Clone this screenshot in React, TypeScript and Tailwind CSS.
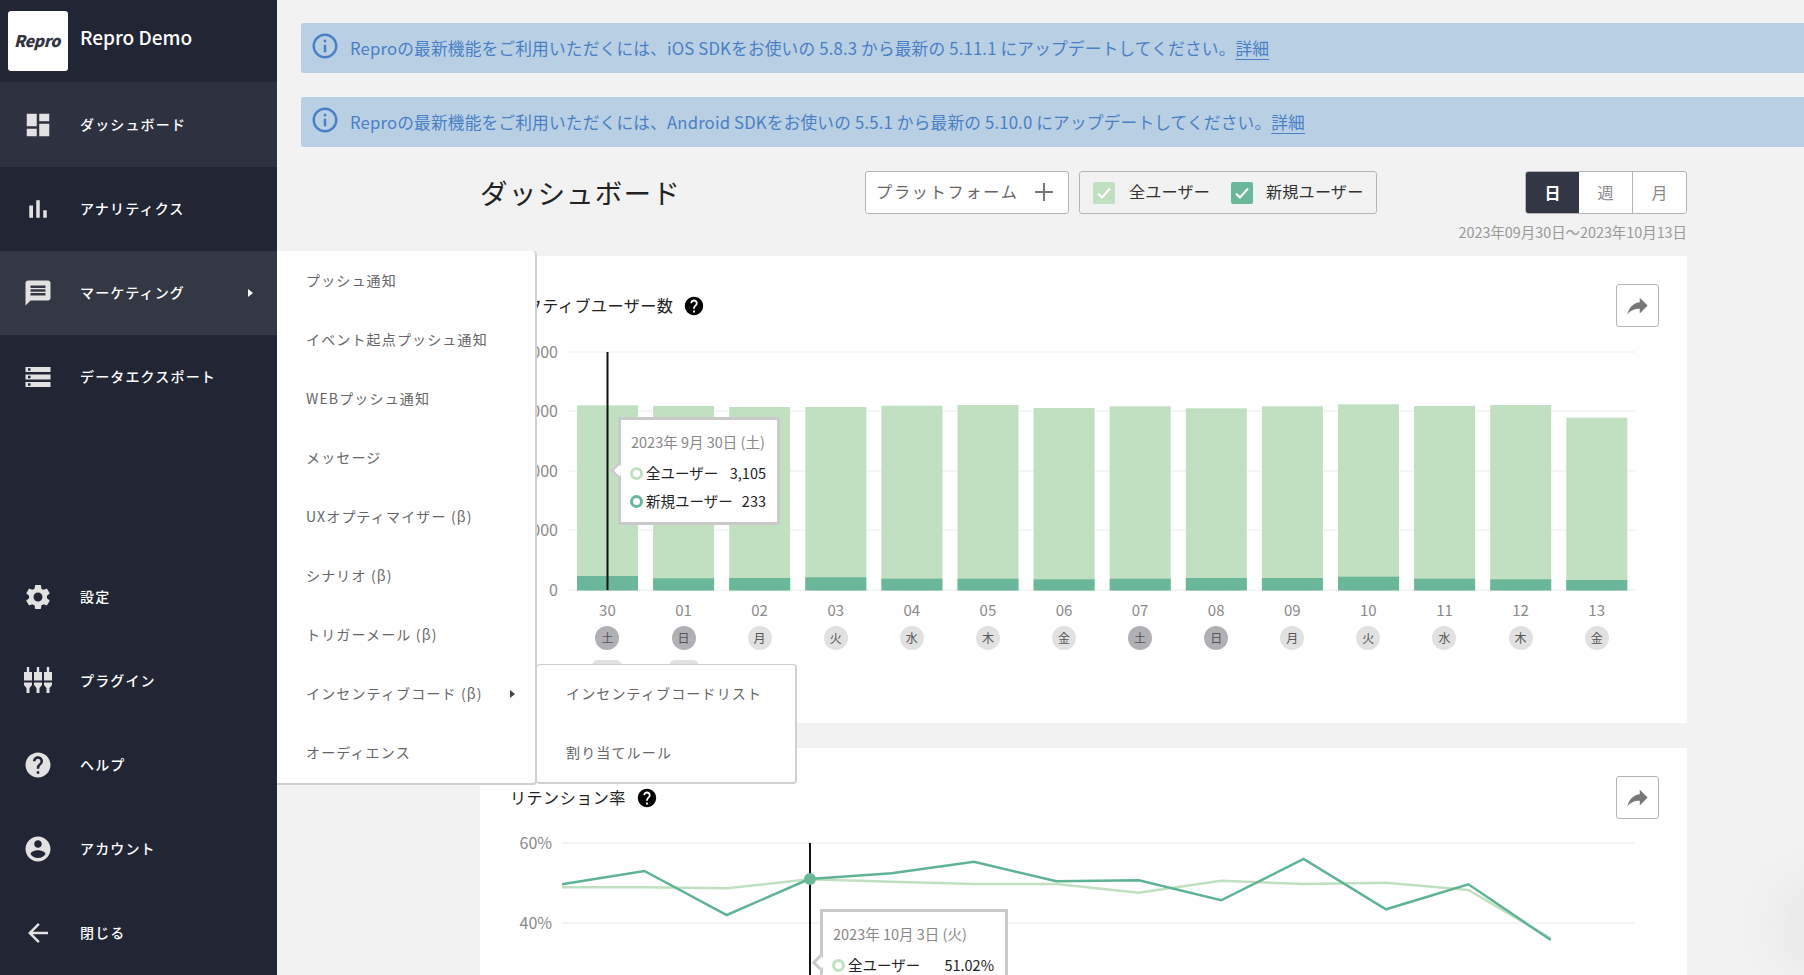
import * as React from 'react';

const FONT = '"Noto Sans CJK JP", "Noto Sans", sans-serif';

const ICONS = {
  dashboard: 'M3 13h8V3H3v10zm0 8h8v-6H3v6zm10 0h8V11h-8v10zm0-18v6h8V3h-8z',
  analytics: 'M5 9.2h3V19H5zM10.6 5h2.8v14h-2.8zm5.6 8H19v6h-2.8z',
  message: 'M20 2H4c-1.1 0-1.99.9-1.99 2L2 22l4-4h14c1.1 0 2-.9 2-2V4c0-1.1-.9-2-2-2zm-2 12H6v-2h12v2zm0-3H6V9h12v2zm0-3H6V6h12v2z',
  storage: 'M2 20h20v-4H2v4zm2-3h2v2H4v-2zM2 4v4h20V4H2zm4 3H4V5h2v2zm-4 7h20v-4H2v4zm2-3h2v2H4v-2z',
  settings: 'M19.14,12.94c0.04-0.3,0.06-0.61,0.06-0.94c0-0.32-0.02-0.64-0.07-0.94l2.03-1.58c0.18-0.14,0.23-0.41,0.12-0.61 l-1.92-3.32c-0.12-0.22-0.37-0.29-0.59-0.22l-2.39,0.96c-0.5-0.38-1.03-0.7-1.62-0.94L14.4,2.81c-0.04-0.24-0.24-0.41-0.48-0.41 h-3.84c-0.24,0-0.43,0.17-0.47,0.41L9.25,5.35C8.66,5.59,8.12,5.92,7.63,6.29L5.24,5.33c-0.22-0.08-0.47,0-0.59,0.22L2.74,8.87 C2.62,9.08,2.66,9.34,2.86,9.48l2.03,1.58C4.84,11.36,4.8,11.69,4.8,12s0.02,0.64,0.07,0.94l-2.03,1.58 c-0.18,0.14-0.23,0.41-0.12,0.61l1.92,3.32c0.12,0.22,0.37,0.29,0.59,0.22l2.39-0.96c0.5,0.38,1.03,0.7,1.62,0.94l0.36,2.54 c0.05,0.24,0.24,0.41,0.48,0.41h3.84c0.24,0,0.44-0.17,0.47-0.41l0.36-2.54c0.59-0.24,1.13-0.56,1.62-0.94l2.39,0.96 c0.22,0.08,0.47,0,0.59-0.22l1.92-3.32c0.12-0.22,0.07-0.47-0.12-0.61L19.14,12.94z M12,15.6c-1.98,0-3.6-1.62-3.6-3.6 s1.62-3.6,3.6-3.6s3.6,1.62,3.6,3.6S13.98,15.6,12,15.6z',
  help: 'M12 2C6.48 2 2 6.48 2 12s4.48 10 10 10 10-4.48 10-10S17.52 2 12 2zm1 17h-2v-2h2v2zm2.07-7.75l-.9.92C13.45 12.9 13 13.5 13 15h-2v-.5c0-1.1.45-2.1 1.17-2.83l1.24-1.26c.37-.36.59-.86.59-1.41 0-1.1-.9-2-2-2s-2 .9-2 2H8c0-2.21 1.79-4 4-4s4 1.79 4 4c0 .88-.36 1.68-.93 2.25z',
  account: 'M12 2C6.48 2 2 6.48 2 12s4.48 10 10 10 10-4.48 10-10S17.52 2 12 2zm0 3c1.66 0 3 1.34 3 3s-1.34 3-3 3-3-1.34-3-3 1.34-3 3-3zm0 14.2c-2.5 0-4.71-1.28-6-3.22.03-1.99 4-3.08 6-3.08 1.99 0 5.97 1.09 6 3.08-1.29 1.94-3.5 3.22-6 3.22z',
  back: 'M20 11H7.83l5.59-5.59L12 4l-8 8 8 8 1.41-1.41L7.83 13H20v-2z',
  info: 'M11 7h2v2h-2zm0 4h2v6h-2zm1-9C6.48 2 2 6.48 2 12s4.48 10 10 10 10-4.48 10-10S17.52 2 12 2zm0 18c-4.41 0-8-3.59-8-8s3.59-8 8-8 8 3.59 8 8-3.59 8-8 8z',
  share: 'M14 9V5l7 7-7 7v-4.1c-5 0-8.5 1.6-11 5.1 1-5 4-10 11-11z',
};

const Icon = ({ d, className }: { d: string; className?: string }) => (
  <svg viewBox="0 0 24 24" fill="currentColor" className={className}>
    <path d={d} />
  </svg>
);

const PluginIcon = () => (
  <svg viewBox="0 0 30 30" fill="currentColor" className="h-[30px] w-[30px]">
    {[5, 15, 25].map((x) => (
      <g key={x}>
        <rect x={x - 1.2} y="1" width="2.4" height="6" />
        <rect x={x - 4} y="6" width="8" height="8.5" />
        <path d={`M${x - 4} 16.5h8v2.5l-2.5 3v5h-3v-5l-2.5-3z`} />
      </g>
    ))}
  </svg>
);

const Caret = ({ className }: { className?: string }) => (
  <svg viewBox="0 0 5 8" fill="currentColor" className={className}>
    <path d="M0 0l5 4-5 4z" />
  </svg>
);

const NavItem = ({ icon, label, tone, caret }: { icon: React.ReactNode; label: string; tone?: string; caret?: boolean }) => (
  <div className={`flex h-[84px] shrink-0 items-center pl-[23px] pr-[24px] ${tone ?? ''}`}>
    <div className="flex w-[30px] justify-center text-[#e2e2e2]">{icon}</div>
    <span className="-mt-[2px] ml-[27px] text-[14px] font-medium tracking-[1.15px] text-white">{label}</span>
    {caret && <Caret className="ml-auto h-[8px] w-[5px] text-white" />}
  </div>
);

const Sidebar = () => (
  <aside className="flex h-full w-[277px] shrink-0 flex-col bg-[#212534]">
    <div className="flex h-[83px] shrink-0 border-b border-[#2d3140] pl-[8px] pt-[11px]">
      <div className="flex h-[60px] w-[60px] items-center justify-center rounded-[3px] bg-white pb-[3px] pr-[2px]">
        <span className="text-[16px] font-black italic tracking-[-0.5px] text-[#33353f]">Repro</span>
      </div>
      <span className="ml-[12px] mt-[11px] text-[19px] font-medium leading-[30px] text-white">Repro Demo</span>
    </div>
    <NavItem tone="bg-[#2d3140]" icon={<Icon d={ICONS.dashboard} className="h-[30px] w-[30px]" />} label="ダッシュボード" />
    <NavItem icon={<Icon d={ICONS.analytics} className="h-[30px] w-[30px]" />} label="アナリティクス" />
    <NavItem tone="bg-[#343844]" caret icon={<Icon d={ICONS.message} className="h-[30px] w-[30px]" />} label="マーケティング" />
    <NavItem icon={<Icon d={ICONS.storage} className="h-[30px] w-[30px]" />} label="データエクスポート" />
    <div className="flex-1" />
    <NavItem icon={<Icon d={ICONS.settings} className="h-[30px] w-[30px]" />} label="設定" />
    <NavItem icon={<PluginIcon />} label="プラグイン" />
    <NavItem icon={<Icon d={ICONS.help} className="h-[30px] w-[30px]" />} label="ヘルプ" />
    <NavItem icon={<Icon d={ICONS.account} className="h-[30px] w-[30px]" />} label="アカウント" />
    <NavItem icon={<Icon d={ICONS.back} className="h-[30px] w-[30px]" />} label="閉じる" />
  </aside>
);

const Notice = ({ text }: { text: string }) => (
  <div className="flex h-[50px] items-center rounded-l-[3px] bg-[#b9cfe4] pl-[9px] text-[#4a7fc4]">
    <Icon d={ICONS.info} className="-mt-[4px] h-[30px] w-[30px]" />
    <span className="ml-[10px] mt-[1px] text-[16.7px] tracking-[0.17px]">
      {text}
      <span className="underline underline-offset-4">詳細</span>
    </span>
  </div>
);

const Check = ({ tone }: { tone: string }) => (
  <div className={`flex h-[22px] w-[22px] items-center justify-center rounded-[2px] ${tone}`}>
    <svg viewBox="0 0 22 22" fill="none" stroke="white" strokeWidth="2" className="h-[22px] w-[22px]">
      <path d="M5 11.5l4 4 8-9" />
    </svg>
  </div>
);

const Toolbar = () => (
  <div className="flex h-[43px] items-center">
    <h1 className="w-[385px] text-[27.6px] font-normal tracking-[1.1px] text-[#222]">ダッシュボード</h1>
    <div className="flex h-[43px] w-[204px] items-center rounded-[3px] border border-[#b5b5b5] bg-white pl-[10px] text-[16.1px] tracking-[1.8px] text-[#666]">
      <span className="-mt-[3px]">プラットフォーム</span>
      <svg viewBox="0 0 18 18" stroke="#777" strokeWidth="2" className="-mt-[1px] ml-[16px] h-[18px] w-[18px]">
        <path d="M9 0v18M0 9h18" />
      </svg>
    </div>
    <div className="ml-[10px] flex h-[43px] w-[298px] items-center rounded-[3px] border border-[#b5b5b5] pl-[13px] text-[16.1px] tracking-[0.2px] text-[#333]">
      <Check tone="bg-[#c0e0c0]" />
      <span className="-mt-[3px] ml-[14px] w-[102px]">全ユーザー</span>
      <Check tone="bg-[#6ab79a]" />
      <span className="-mt-[3px] ml-[13px]">新規ユーザー</span>
    </div>
    <div className="ml-auto flex h-[43px] w-[162px] overflow-hidden rounded-[3px] border border-[#b5b5b5] bg-white pb-0 text-[16px] text-[#888]">
      <div className="flex w-[53px] items-center justify-center bg-[#323645] pb-[2px] font-bold text-white">日</div>
      <div className="flex w-[54px] items-center justify-center border-r border-[#b5b5b5] pb-[2px]">週</div>
      <div className="flex flex-1 items-center justify-center pb-[2px]">月</div>
    </div>
  </div>
);

const CardHeader = ({ title }: { title: string }) => (
  <div className="flex h-[43px] items-center pl-[30px] pr-[28px]">
    <span className="text-[16.1px] tracking-[0.45px] text-[#222]">{title}</span>
    <Icon d={ICONS.help} className="ml-[10px] h-[22px] w-[22px] text-black" />
    <div className="ml-auto flex h-[43px] w-[43px] items-center justify-center rounded-[3px] border border-[#b5b5b5] bg-white text-[#777]">
      <Icon d={ICONS.share} className="h-[27px] w-[27px]" />
    </div>
  </div>
);

const Y_FONT = { fontFamily: FONT, fontSize: 16, fill: '#8a8a8a' };

const BARS: [number, number][] = [
  [405.3, 576], [406, 578.3], [407, 578], [407, 577.3], [405.7, 578.7], [405, 578.7], [408, 579.3],
  [406.3, 578.7], [408.3, 578], [406.3, 578], [404.3, 576.7], [406, 578.7], [405, 579.3], [417.7, 580],
];

const BarChart = () => {
  const Y0 = 350;
  const grid: [number, string][] = [[352, '4,000'], [411, '3,000'], [471, '2,000'], [530, '1,000'], [590, '0']];
  return (
    <svg width="1207" height="244" className="mt-[23px] block overflow-visible">
      {grid.map(([y, t]) => (
        <g key={t}>
          <line x1="89" x2="1155" y1={y - Y0} y2={y - Y0} stroke="#f3f3f3" strokeWidth="1.5" />
          <text x="78" y={y - Y0 + 5.5} textAnchor="end" style={Y_FONT}>{t}</text>
        </g>
      ))}
      {BARS.map(([top, dark], i) => {
        const x = 97 + i * 76.1;
        return (
          <g key={i}>
            <rect x={x} y={top - Y0} width="61" height={590.5 - top} fill="#c1e0c1" />
            <rect x={x} y={dark - Y0} width="61" height={590.5 - dark} fill="#6ab79a" />
          </g>
        );
      })}
      <line x1="127.5" x2="127.5" y1="2" y2="240" stroke="#111" strokeWidth="2" />
    </svg>
  );
};

const DAYS: [string, string, boolean][] = [
  ['30', '土', true], ['01', '日', true], ['02', '月', false], ['03', '火', false], ['04', '水', false],
  ['05', '木', false], ['06', '金', false], ['07', '土', true], ['08', '日', true], ['09', '月', false],
  ['10', '火', false], ['11', '水', false], ['12', '木', false], ['13', '金', false],
];

const DayAxis = () => (
  <div className="ml-[89.4px] mt-[4px] grid grid-cols-[repeat(14,76.1px)]">
    {DAYS.map(([date, day, weekend], i) => (
      <div key={i} className="flex flex-col items-center">
        <span className="h-[24px] text-[15px] leading-[24px] text-[#8a8a8a]">{date}</span>
        <div className={`mt-[4px] flex h-[24px] w-[24px] items-center justify-center rounded-full text-[12px] text-[#555] ${weekend ? 'bg-[#b0b0b5]' : 'bg-[#e1e1e1]'}`}>
          {day}
        </div>
        {i < 2 && <div className="mt-[10px] h-[20px] w-[30px] rounded-[6px] bg-[#e1e1e1]" />}
      </div>
    ))}
  </div>
);

const DARK_LINE = [884.3, 871, 915, 879, 873.3, 861.7, 881.3, 880.3, 900.3, 859, 909.3, 884.3, 940];
const LIGHT_LINE = [887.3, 887.3, 888.3, 879.3, 881.7, 884, 884, 892.7, 880.7, 884, 882.7, 890, 938.3];

const toPoints = (ys: number[], y0: number) => ys.map((y, i) => `${82 + i * 82.4},${y - y0}`).join(' ');

const LineChart = () => {
  const Y0 = 840;
  return (
    <svg width="1207" height="136" className="mt-[21px] block overflow-visible">
      {[[843, '60%'], [923, '40%']].map(([y, t]) => (
        <g key={t}>
          <line x1="82" x2="1155" y1={Number(y) - Y0} y2={Number(y) - Y0} stroke="#f0f0f0" strokeWidth="1.5" />
          <text x="72" y={Number(y) - Y0 + 5.5} textAnchor="end" style={Y_FONT}>{t}</text>
        </g>
      ))}
      <polyline points={toPoints(LIGHT_LINE, Y0)} fill="none" stroke="#c1e0c1" strokeWidth="2.5" />
      <polyline points={toPoints(DARK_LINE, Y0)} fill="none" stroke="#5fb392" strokeWidth="2.5" />
      <line x1="330" x2="330" y1="3" y2="136" stroke="#111" strokeWidth="2" />
      <circle cx="330" cy={879 - Y0} r="6" fill="#6ab79a" />
    </svg>
  );
};

const Tooltip = ({ date, rows, className }: { date: string; rows: [string, string, string][]; className: string }) => (
  <div className={`absolute border-[3px] border-[#cacaca] bg-white pl-[10px] pr-[11px] pt-[10px] ${className}`}>
    <div className="absolute left-[-9px] top-[45px] h-[11px] w-[11px] rotate-45 border-b-[3px] border-l-[3px] border-[#cacaca] bg-white" />
    <div className="mb-[7px] text-[14.5px] leading-[24px] text-[#888]">{date}</div>
    {rows.map(([label, value, ring]) => (
      <div key={label} className="mt-[4px] flex h-[24px] items-center text-[14.5px] text-[#222]">
        <span className={`-ml-[1px] mr-[3px] h-[13px] w-[13px] shrink-0 rounded-full border-[3px] ${ring}`} />
        <span>{label}</span>
        <span className="ml-auto">{value}</span>
      </div>
    ))}
  </div>
);

const MENU = [
  'プッシュ通知', 'イベント起点プッシュ通知', 'WEBプッシュ通知', 'メッセージ', 'UXオプティマイザー (β)',
  'シナリオ (β)', 'トリガーメール (β)', 'インセンティブコード (β)', 'オーディエンス',
];

const MenuRow = ({ label, caret }: { label: string; caret?: boolean }) => (
  <div className="flex h-[59.1px] items-center pb-[3px] pl-[29px] pr-[20px] text-[14px] tracking-[1.15px] text-[#666]">
    {label}
    {caret && <Caret className="ml-auto h-[8px] w-[5px] text-[#444]" />}
  </div>
);

const Menus = () => (
  <>
    <div className="absolute left-[277px] top-[251px] h-[534px] w-[260px] rounded-r-[4px] border-b-2 border-r-2 border-[#d0d0d0] bg-white pt-[1px]">
      {MENU.map((m, i) => <MenuRow key={m} label={m} caret={i === 7} />)}
    </div>
    <div className="absolute left-[536px] top-[664px] h-[120px] w-[261px] rounded-[4px] border-b-2 border-l border-r-2 border-t border-[#d0d0d0] bg-white">
      <MenuRow label="インセンティブコードリスト" />
      <MenuRow label="割り当てルール" />
    </div>
  </>
);

export default function App() {
  return (
    <div className="relative flex h-screen w-full overflow-hidden bg-[#f2f2f2]" style={{ fontFamily: FONT }}>
      <Sidebar />
      <main className="min-w-0 flex-1 pl-[24px] pt-[23px]">
        <div className="flex flex-col gap-[24px]">
          <Notice text="Reproの最新機能をご利用いただくには、iOS SDKをお使いの 5.8.3 から最新の 5.11.1 にアップデートしてください。" />
          <Notice text="Reproの最新機能をご利用いただくには、Android SDKをお使いの 5.5.1 から最新の 5.10.0 にアップデートしてください。" />
        </div>
        <div className="ml-[179px] w-[1207px] pt-[24px]">
          <Toolbar />
          <div className="mt-[7px] text-right text-[14.4px] leading-[22px] text-[#999]">2023年09月30日～2023年10月13日</div>
          <section className="relative mt-[13px] h-[467px] bg-white pt-[28px]">
            <CardHeader title="アクティブユーザー数" />
            <BarChart />
            <DayAxis />
            <Tooltip
              className="left-[138px] top-[161px] h-[108px] w-[162px]"
              date="2023年 9月 30日 (土)"
              rows={[['全ユーザー', '3,105', 'border-[#c1e0c1]'], ['新規ユーザー', '233', 'border-[#6ab79a]']]}
            />
          </section>
          <section className="relative mt-[25px] h-[300px] bg-white pt-[28px]">
            <CardHeader title="リテンション率" />
            <LineChart />
            <Tooltip
              className="left-[340px] top-[161px] h-[108px] w-[188px]"
              date="2023年 10月 3日 (火)"
              rows={[['全ユーザー', '51.02%', 'border-[#c1e0c1]']]}
            />
          </section>
        </div>
      </main>
      <Menus />
      <div className="pointer-events-none absolute right-[-30px] top-[880px] h-[90px] w-[50px] rounded-full bg-black/5 blur-xl" />
    </div>
  );
}
